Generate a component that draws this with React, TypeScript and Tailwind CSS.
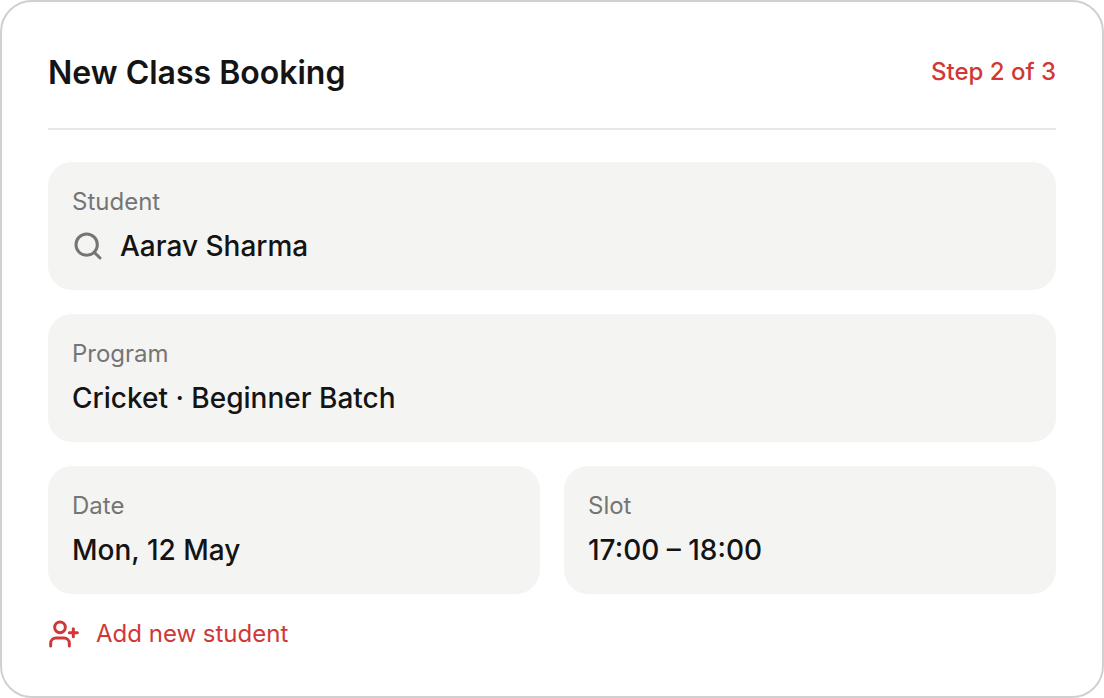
import { useState } from "react";
import { Search, UserPlus } from "lucide-react";

interface FieldProps {
  id: string;
  label: string;
  value: string;
  onChange: (value: string) => void;
  icon?: React.ReactNode;
}

const Field: React.FC<FieldProps> = ({ id, label, value, onChange, icon }) => {
  return (
    <div className="min-w-0 rounded-3xl bg-[#f4f4f3] px-6 py-6">
      <label htmlFor={id} className="block text-2xl leading-8 text-[#757575]">
        {label}
      </label>
      <div className="mt-2 flex items-center gap-4">
        {icon}
        <input
          id={id}
          type="text"
          className="h-10 w-full min-w-0 bg-transparent text-[28px] font-medium text-[#141414] focus:outline-none"
          value={value}
          onChange={(e) => onChange(e.target.value)}
        />
      </div>
    </div>
  );
};

export default function App() {
  const [student, setStudent] = useState("Aarav Sharma");
  const [program, setProgram] = useState("Cricket · Beginner Batch");
  const [date, setDate] = useState("Mon, 12 May");
  const [slot, setSlot] = useState("17:00 – 18:00");

  return (
    <div className="min-h-screen bg-white font-['Inter',sans-serif]">
      <form className="min-h-screen rounded-[32px] border-2 border-[#d0d0d0] bg-white px-[46px] pt-[46px] pb-10">
        <div className="flex items-start justify-between border-b-2 border-[#e8e8e3] pb-[30px]">
          <h1 className="text-[32px] leading-[50px] font-semibold text-[#141414]">New Class Booking</h1>
          <span className="text-2xl leading-[48px] font-medium text-[#d03838]">Step 2 of 3</span>
        </div>

        <div className="mt-8 grid grid-cols-2 gap-6">
          <div className="col-span-2">
            <Field
              id="student"
              label="Student"
              value={student}
              onChange={setStudent}
              icon={<Search strokeWidth={2.25} className="size-8 shrink-0 text-[#757575]" />}
            />
          </div>
          <div className="col-span-2">
            <Field id="program" label="Program" value={program} onChange={setProgram} />
          </div>
          <Field id="date" label="Date" value={date} onChange={setDate} />
          <Field id="slot" label="Slot" value={slot} onChange={setSlot} />
        </div>

        <button type="button" className="mt-6 flex items-center gap-4 text-2xl text-[#d03838]">
          <UserPlus strokeWidth={2.25} className="size-8" />
          Add new student
        </button>
      </form>
    </div>
  );
}
